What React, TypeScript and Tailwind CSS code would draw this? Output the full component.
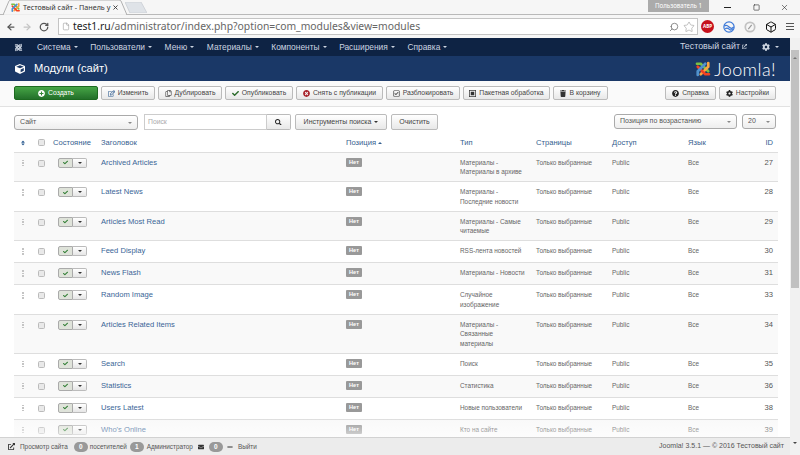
import { ArrowLeft, ArrowRight, RotateCw, File, Search, Star, Box, X, Square } from 'lucide-react';
import {
  FaPlusCircle, FaRegEdit, FaRegCopy, FaCheck, FaTimesCircle, FaRegCheckSquare, FaTrash,
  FaQuestionCircle, FaCog, FaSearch, FaCube, FaExternalLinkAlt, FaEnvelope, FaMinus, FaSort,
} from 'react-icons/fa';
import type { ReactNode } from 'react';

interface Row {
  title: string;
  type: string[];
  id: number;
}

const rows: Row[] = [
  { title: 'Archived Articles', type: ['Материалы -', 'Материалы в архиве'], id: 27 },
  { title: 'Latest News', type: ['Материалы -', 'Последние новости'], id: 28 },
  { title: 'Articles Most Read', type: ['Материалы - Самые', 'читаемые'], id: 29 },
  { title: 'Feed Display', type: ['RSS-лента новостей'], id: 30 },
  { title: 'News Flash', type: ['Материалы - Новости'], id: 31 },
  { title: 'Random Image', type: ['Случайное', 'изображение'], id: 33 },
  { title: 'Articles Related Items', type: ['Материалы -', 'Связанные', 'материалы'], id: 34 },
  { title: 'Search', type: ['Поиск'], id: 35 },
  { title: 'Statistics', type: ['Статистика'], id: 36 },
  { title: 'Users Latest', type: ['Новые пользователи'], id: 38 },
  { title: "Who's Online", type: ['Кто на сайте'], id: 39 },
];

const navItems = ['Система', 'Пользователи', 'Меню', 'Материалы', 'Компоненты', 'Расширения', 'Справка'];

function JoomlaMark({ mono, className }: { mono?: string; className: string }) {
  const c = (color: string) => mono ?? color;
  return (
    <svg viewBox="0 0 24 24" className={className} fill="none" strokeLinecap="round" strokeWidth="3.6">
      <path d="M4 5 L9 5 L19 15" stroke={c('#7ac143')} />
      <path d="M19 4 L19 9 L9 19" stroke={c('#f9a541')} />
      <path d="M20 19 L15 19 L5 9" stroke={c('#f44321')} />
      <path d="M5 20 L5 15 L15 5" stroke={c('#5091cd')} />
    </svg>
  );
}

function Caret({ className = 'border-t-[#333]' }: { className?: string }) {
  return <span className={`inline-block w-0 h-0 border-x-[2px] border-x-transparent border-t-[2.5px] ${className}`} />;
}

function BatchIcon() {
  return (
    <svg viewBox="0 0 10 10" className="w-[7px] h-[7px]">
      <rect x="0.5" y="0.5" width="9" height="9" fill="none" stroke="#333" />
      <rect x="2.5" y="2.5" width="5" height="5" fill="#333" />
    </svg>
  );
}

function ToolButton({ width, icon, label }: { width: string; icon: ReactNode; label: string }) {
  return (
    <button className={`${width} h-[14px] flex items-center justify-center gap-[3px] rounded-[2px] border border-[#bbb] bg-gradient-to-b from-white to-[#e8e8e8] text-[6.8px] text-[#444]`}>
      {icon}
      <span className="whitespace-nowrap">{label}</span>
    </button>
  );
}

function FooterBadge({ value }: { value: number }) {
  return (
    <span className="block h-[10px] w-[14px] rounded-full bg-[#999] text-white text-[6.5px] font-bold leading-[10px] text-center">
      {value}
    </span>
  );
}

function BrowserChrome() {
  return (
    <div className="h-[38px] bg-[#f6f6f6] shrink-0 font-['Noto_Sans',sans-serif]">
      <div className="relative h-[15px] flex items-end pl-[3px] border-b border-[#b9b9b9]">
        <div className="relative z-10 w-[124px] h-[15px] flex items-center pl-[7px] pr-[5px] -mb-px">
          <svg viewBox="0 0 124 15" className="absolute inset-0 w-full h-full">
            <path d="M0 15 L6 1 Q6.5 0 8 0 L116 0 Q117.5 0 118 1 L124 15 Z" fill="#f6f6f6" stroke="#b0b0b0" />
            <path d="M1 15 L123 15" stroke="#f6f6f6" strokeWidth="1.5" />
          </svg>
          <JoomlaMark className="relative w-[11px] h-[11px] shrink-0" />
          <span className="relative ml-[2px] w-[86px] whitespace-nowrap text-[7.2px] text-[#333]">Тестовый сайт - Панель у</span>
          <X className="relative ml-[3px] w-[7px] h-[7px] text-[#333]" strokeWidth={3} />
        </div>
        <svg viewBox="0 0 22 11" className="w-[22px] h-[11px] -ml-[2px] mb-[1px]">
          <path d="M0 0 L16 0 L22 11 L5 11 Z" fill="#dfe3e8" stroke="#cfd3d8" />
        </svg>
        <div className="absolute right-[91px] top-0 w-[61px] h-[12px] bg-[#ababab] text-white text-[6.2px] leading-[12px] text-center whitespace-nowrap">Пользователь 1</div>
        <div className="absolute right-[69px] top-[7px] w-[7px] h-px bg-[#222]" />
        <Square className="absolute right-[40px] top-[4px] w-[7px] h-[7px] text-[#222]" strokeWidth={2} />
        <X className="absolute right-[11px] top-[3px] w-[9px] h-[9px] text-[#222]" strokeWidth={1.5} />
      </div>
      <div className="h-[22px] flex items-center pl-[6px] pr-[6px] pt-[1px]">
        <ArrowLeft className="w-[10px] h-[10px] text-[#555]" strokeWidth={3} />
        <ArrowRight className="ml-[6px] w-[10px] h-[10px] text-[#c4c4c4]" strokeWidth={3} />
        <RotateCw className="ml-[7px] w-[10px] h-[10px] text-[#555]" strokeWidth={3} />
        <div className="ml-[9px] w-[640px] h-[17px] flex items-center border border-[#c4c4c4] bg-white pl-[3px] pr-[2px]">
          <File className="w-[8px] h-[9px] text-[#888]" strokeWidth={1.5} />
          <span className="ml-[3px] text-[10.35px] text-[#666] whitespace-nowrap">
            <span className="text-[#222]">test1.ru</span>/administrator/index.php?option=com_modules&amp;view=modules
          </span>
          <Search className="ml-auto w-[10px] h-[10px] text-[#777] -scale-x-100" strokeWidth={2} />
          <Star className="ml-[4px] w-[12px] h-[12px] text-[#999]" strokeWidth={1.2} />
        </div>
        <div className="ml-[2px] flex-1 flex items-center justify-between pl-[1px]">
          <span className="w-[13px] h-[13px] rounded-full bg-[#c6101c] text-white text-[4.6px] font-bold leading-[13px] text-center">ABP</span>
          <svg viewBox="0 0 14 14" className="w-[12px] h-[12px]" fill="none" stroke="#3b78d8" strokeWidth="1.4">
            <circle cx="7" cy="7" r="6" />
            <path d="M1.5 6 Q4 4 7 7 T12.5 7 M2.5 9 Q5 7.5 7 9.5 T11.5 9.5" />
          </svg>
          <svg viewBox="0 0 14 14" className="w-[12px] h-[12px]" fill="none" stroke="#c2c2c2" strokeWidth="2">
            <circle cx="7" cy="7" r="5.5" />
            <path d="M5 9.5 L9 4.5" stroke="#9a9a9a" strokeWidth="1.4" />
          </svg>
          <Box className="w-[12px] h-[12px] text-[#111]" strokeWidth={2} />
          <div className="w-[8px] flex flex-col gap-[1.5px]">
            <span className="h-[1.5px] bg-[#555]" />
            <span className="h-[1.5px] bg-[#555]" />
            <span className="h-[1.5px] bg-[#555]" />
          </div>
        </div>
      </div>
    </div>
  );
}

function AdminHeader() {
  return (
    <>
      <div className="h-[18px] bg-[#0e2344] flex items-center pl-[14px] pr-[11px] text-[8.4px] text-[#cdd5e1]">
        <JoomlaMark mono="#cdd5e1" className="w-[9px] h-[9px]" />
        <div className="ml-[14px] flex items-center gap-[12.6px]">
          {navItems.map((item) => (
            <span key={item} className="flex items-center gap-[3px] whitespace-nowrap">
              {item}
              <Caret className="border-t-[#cdd5e1]" />
            </span>
          ))}
        </div>
        <span className="ml-auto flex items-center gap-[2px] whitespace-nowrap text-[8.9px]">
          Тестовый сайт
          <FaExternalLinkAlt className="w-[5px] h-[5px]" />
        </span>
        <FaCog className="ml-[15px] w-[8px] h-[8px]" />
        <span className="ml-[5px] flex"><Caret className="border-t-[#cdd5e1]" /></span>
      </div>
      <div className="h-[25px] bg-[#1a3867] flex items-center pl-[15px] pr-[14px] text-white">
        <FaCube className="w-[10px] h-[10px]" />
        <h1 className="ml-[9px] text-[11.2px] leading-none">Модули (сайт)</h1>
        <div className="ml-auto flex items-center">
          <JoomlaMark className="w-[18px] h-[18px]" />
          <span className="ml-[2px] font-['Lato',sans-serif] font-light text-[18px] leading-none tracking-[0.4px]">Joomla!</span>
        </div>
      </div>
    </>
  );
}

function Toolbar() {
  return (
    <div className="h-[26px] shrink-0 flex items-center gap-[3px] px-[14px] pb-[1px] bg-[#fafafa] border-b border-[#e2e2e2]">
      <button className="w-[84px] h-[14px] flex items-center justify-center gap-[3px] rounded-[2px] border border-[#1d6a20] bg-gradient-to-b from-[#46a546] to-[#23702a] text-[6.8px] text-white">
        <FaPlusCircle className="w-[7px] h-[7px]" />
        Создать
      </button>
      <ToolButton width="w-[54px]" icon={<FaRegEdit className="w-[7px] h-[7px] text-[#2f5c8f]" />} label="Изменить" />
      <ToolButton width="w-[64px]" icon={<FaRegCopy className="w-[7px] h-[7px] text-[#555]" />} label="Дублировать" />
      <ToolButton width="w-[68px]" icon={<FaCheck className="w-[7px] h-[7px] text-[#2a6b2a]" />} label="Опубликовать" />
      <ToolButton width="w-[87px]" icon={<FaTimesCircle className="w-[7px] h-[7px] text-[#a8232c]" />} label="Снять с публикации" />
      <ToolButton width="w-[74px]" icon={<FaRegCheckSquare className="w-[7px] h-[7px] text-[#333]" />} label="Разблокировать" />
      <ToolButton width="w-[87px]" icon={<BatchIcon />} label="Пакетная обработка" />
      <ToolButton width="w-[55px]" icon={<FaTrash className="w-[6px] h-[7px] text-[#333]" />} label="В корзину" />
      <div className="ml-auto flex gap-[3px]">
        <ToolButton width="w-[51px]" icon={<FaQuestionCircle className="w-[7px] h-[7px] text-[#222]" />} label="Справка" />
        <ToolButton width="w-[57px]" icon={<FaCog className="w-[7px] h-[7px] text-[#222]" />} label="Настройки" />
      </div>
    </div>
  );
}

function Filters() {
  const selectCls = 'h-[15px] flex items-center justify-between rounded-[3px] border border-[#aaa] bg-gradient-to-b from-white to-[#eee] px-[5px] text-[7px] text-[#555] whitespace-nowrap';
  return (
    <div className="flex items-start px-[14px] pt-[7px] text-[7px] text-[#444]">
      <div className={`w-[124px] mt-[1px] ${selectCls}`}>
        Сайт
        <Caret className="border-t-[#888]" />
      </div>
      <div className="ml-[6px] w-[123px] h-[16px] border border-[#ccc] bg-white pl-[3px] leading-[14px] text-[6.8px] text-[#aaa]">Поиск</div>
      <button className="w-[24px] h-[16px] flex items-center justify-center rounded-r-[2px] border border-l-0 border-[#bbb] bg-gradient-to-b from-white to-[#e8e8e8]">
        <FaSearch className="w-[6.5px] h-[6.5px] text-[#222]" />
      </button>
      <button className="ml-[4px] w-[92px] h-[16px] flex items-center justify-center gap-[3px] rounded-[2px] border border-[#bbb] bg-gradient-to-b from-white to-[#e8e8e8] whitespace-nowrap">
        Инструменты поиска
        <Caret />
      </button>
      <button className="ml-[4px] w-[47px] h-[16px] rounded-[2px] border border-[#bbb] bg-gradient-to-b from-white to-[#e8e8e8]">Очистить</button>
      <div className={`ml-auto w-[123px] ${selectCls}`}>
        Позиция по возрастанию
        <Caret className="border-t-[#888]" />
      </div>
      <div className={`ml-[5px] w-[34px] ${selectCls}`}>
        20
        <Caret className="border-t-[#888]" />
      </div>
    </div>
  );
}

function CheckBox() {
  return <span className="block mx-auto w-[7px] h-[7px] rounded-[1.5px] border border-[#bbb] bg-[#e9e9e9]" />;
}

function ModulesTable() {
  const th = 'px-[4px] font-normal text-left text-[7.6px] text-[#35608f] whitespace-nowrap';
  const td = 'pt-[5px] pb-[4px] align-top leading-[9.75px] whitespace-nowrap';
  const small = 'px-[4px] text-[6.4px] text-[#666]';
  return (
    <table className="mt-[4px] ml-[14px] w-[764px] table-fixed border-collapse">
      <colgroup>
        <col className="w-[18px]" />
        <col className="w-[16px]" />
        <col className="w-[49px]" />
        <col className="w-[245px]" />
        <col className="w-[114px]" />
        <col className="w-[76px]" />
        <col className="w-[76px]" />
        <col className="w-[76px]" />
        <col className="w-[60px]" />
        <col className="w-[34px]" />
      </colgroup>
      <thead>
        <tr className="h-[18px]">
          <th className={th}><FaSort className="mx-auto w-[6px] h-[6px] text-[#2a5a8e]" /></th>
          <th className={`${th} pl-[5px] pr-[3px]`}><CheckBox /></th>
          <th className={`${th} pl-[5px]`}>Состояние</th>
          <th className={th}>Заголовок</th>
          <th className={th}>
            <span className="flex items-center gap-[2px]">
              Позиция
              <Caret className="rotate-180 border-t-[#35608f]" />
            </span>
          </th>
          <th className={th}>Тип</th>
          <th className={th}>Страницы</th>
          <th className={th}>Доступ</th>
          <th className={th}>Язык</th>
          <th className={`${th} text-right pr-[5px]`}>ID</th>
        </tr>
      </thead>
      <tbody>
        {rows.map((row, i) => (
          <tr key={row.id} className={`h-[22px] border-t border-[#dedede] ${i % 2 === 0 ? 'bg-[#f9f9f9]' : 'bg-white'}`}>
            <td className={`${td} px-[4px]`}>
              <span className="mt-[2px] mx-auto flex w-[2px] flex-col gap-[1px]">
                <i className="h-[1.5px] bg-[#c4c4c4]" />
                <i className="h-[1.5px] bg-[#c4c4c4]" />
                <i className="h-[1.5px] bg-[#c4c4c4]" />
              </span>
            </td>
            <td className={`${td} pl-[5px] pr-[3px]`}>
              <span className="block mt-[2px]"><CheckBox /></span>
            </td>
            <td className={`${td} pl-[10px]`}>
              <span className="flex h-[10px] w-[29px]">
                <span className="w-[15px] flex items-center justify-center rounded-l-[2px] border border-[#aaa] bg-[#dfe3da]">
                  <FaCheck className="w-[5px] h-[5px] text-[#2f7d32]" />
                </span>
                <span className="w-[14px] flex items-center justify-center rounded-r-[2px] border border-l-0 border-[#bbb] bg-gradient-to-b from-white to-[#e6e6e6]">
                  <Caret />
                </span>
              </span>
            </td>
            <td className={`${td} px-[4px] text-[7.6px] text-[#3a6597]`}>{row.title}</td>
            <td className={`${td} px-[4px]`}>
              <span className="block w-[16px] h-[9px] rounded-[1px] bg-[#999] text-center text-[5.6px] leading-[9px] font-bold text-white">Нет</span>
            </td>
            <td className={`${td} ${small}`}>
              {row.type.map((line) => (
                <span key={line} className="block">{line}</span>
              ))}
            </td>
            <td className={`${td} ${small}`}>Только выбранные</td>
            <td className={`${td} ${small}`}>Public</td>
            <td className={`${td} ${small}`}>Все</td>
            <td className={`${td} pl-[4px] pr-[5px] text-right text-[7.6px] text-[#555]`}>{row.id}</td>
          </tr>
        ))}
      </tbody>
    </table>
  );
}

function Footer() {
  return (
    <div className="h-[18px] shrink-0 flex items-center pl-[8px] pr-[6px] border-t border-[#d2d2d2] bg-[#ececec] text-[6.4px] text-[#555] whitespace-nowrap">
      <FaExternalLinkAlt className="w-[7px] h-[7px] text-[#333]" />
      <span className="ml-[5px]">Просмотр сайта</span>
      <span className="ml-[6px]"><FooterBadge value={0} /></span>
      <span className="ml-[2px]">посетителей</span>
      <span className="ml-[3px]"><FooterBadge value={1} /></span>
      <span className="ml-[3px]">Администратор</span>
      <FaEnvelope className="ml-[4px] w-[8px] h-[6px] text-[#333]" />
      <span className="ml-[4px]"><FooterBadge value={0} /></span>
      <FaMinus className="ml-[3px] w-[8px] h-[6px] text-[#333]" />
      <span className="ml-[4px]">Выйти</span>
      <span className="ml-auto text-[7px]">Joomla! 3.5.1 — © 2016 Тестовый сайт</span>
    </div>
  );
}

export default function App() {
  return (
    <div className="w-[800px] h-[455px] flex flex-col overflow-hidden bg-white font-['Liberation_Sans',Arial,sans-serif]">
      <BrowserChrome />
      <div className="flex-1 flex min-h-0">
        <div className="w-[790px] flex flex-col">
          <AdminHeader />
          <Toolbar />
          <div className="relative flex-1 min-h-0 overflow-hidden">
            <Filters />
            <ModulesTable />
            <div className="absolute inset-x-0 bottom-0 h-[18px] bg-gradient-to-b from-white/0 to-white/60 pointer-events-none" />
          </div>
          <Footer />
        </div>
        <div className="w-[10px] relative bg-[#f1f1f1]">
          <span className="absolute left-[3px] top-[4px]"><Caret className="rotate-180 border-t-[#777]" /></span>
          <div className="mt-[12px] mx-auto w-[8px] h-[238px] bg-[#c1c1c1]" />
          <span className="absolute left-[3px] bottom-[4px]"><Caret className="border-t-[#444]" /></span>
        </div>
      </div>
    </div>
  );
}
